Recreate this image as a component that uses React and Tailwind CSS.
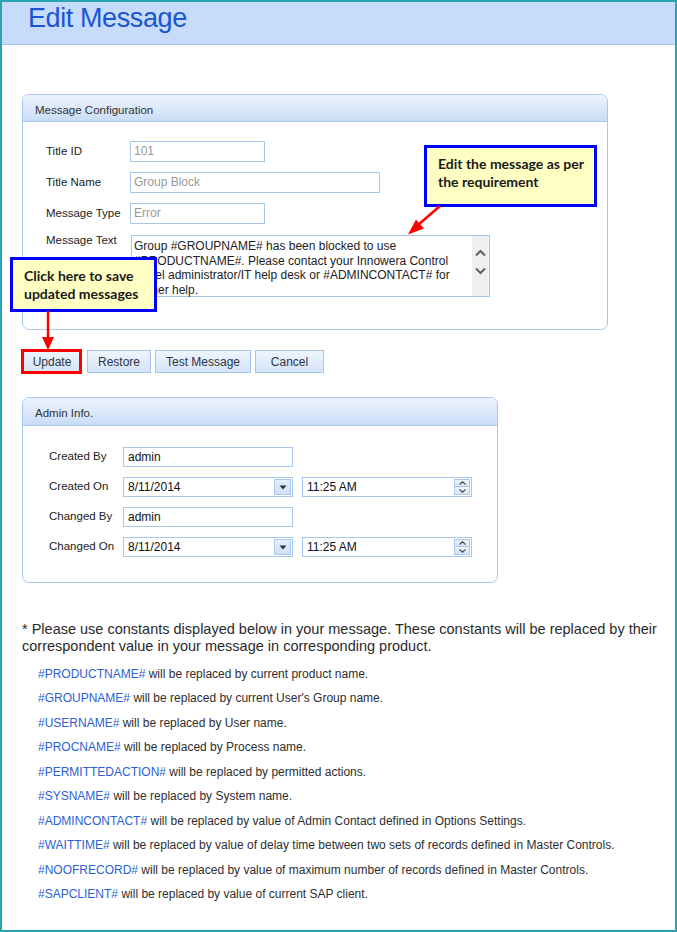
import React from "react";

const constants = [
  ["#PRODUCTNAME#", "will be replaced by current product name."],
  ["#GROUPNAME#", "will be replaced by current User's Group name."],
  ["#USERNAME#", "will be replaced by User name."],
  ["#PROCNAME#", "will be replaced by Process name."],
  ["#PERMITTEDACTION#", "will be replaced by permitted actions."],
  ["#SYSNAME#", "will be replaced by System name."],
  ["#ADMINCONTACT#", "will be replaced by value of Admin Contact defined in Options Settings."],
  ["#WAITTIME#", "will be replaced by value of delay time between two sets of records defined in Master Controls."],
  ["#NOOFRECORD#", "will be replaced by value of maximum number of records defined in Master Controls."],
  ["#SAPCLIENT#", "will be replaced by value of current SAP client."],
];

function PanelHeader({ title }) {
  return (
    <div className="h-[27px] border-b border-[#a9c8ef] rounded-t-[6px] bg-linear-to-b from-[#ebf3fe] via-[#dce9fb] to-[#c9dcf6] pl-[12px] pt-[8px] text-[11.5px] leading-[14px] text-[#333]">
      {title}
    </div>
  );
}

function DateBox({ value }) {
  return (
    <div className="relative w-[170px] h-[20px] border border-[#a9c6ec] bg-white pl-[4px] text-[12px] leading-[18px] text-[#111]">
      {value}
      <div className="absolute right-[1px] top-[1px] w-[17px] h-[16px] border border-[#a9c6ec] bg-linear-to-b from-[#e4eefc] to-[#cfe0f7] flex items-center justify-center">
        <svg width="8" height="5" viewBox="0 0 8 5">
          <path d="M0.5 0.5 L7.5 0.5 L4 4.5 Z" fill="#333" />
        </svg>
      </div>
    </div>
  );
}

function TimeBox({ value }) {
  return (
    <div className="relative w-[170px] h-[20px] border border-[#a9c6ec] bg-white pl-[4px] text-[12px] leading-[18px] text-[#111]">
      {value}
      <div className="absolute right-[1px] top-[1px] w-[16px] h-[16px] flex flex-col">
        <div className="h-[8px] border border-[#a9c6ec] bg-linear-to-b from-[#eef4fd] to-[#d6e5f8] flex items-center justify-center">
          <svg width="7" height="4" viewBox="0 0 7 4">
            <path d="M0.5 3.5 L3.5 0.8 L6.5 3.5" fill="none" stroke="#444" strokeWidth="1.1" />
          </svg>
        </div>
        <div className="h-[8px] border border-t-0 border-[#a9c6ec] bg-linear-to-b from-[#eef4fd] to-[#d6e5f8] flex items-center justify-center">
          <svg width="7" height="4" viewBox="0 0 7 4">
            <path d="M0.5 0.5 L3.5 3.2 L6.5 0.5" fill="none" stroke="#444" strokeWidth="1.1" />
          </svg>
        </div>
      </div>
    </div>
  );
}

function Btn({ w, children }) {
  return (
    <div className={`${w} h-[23px] border border-[#a7c4ea] bg-linear-to-b from-[#eef5fe] to-[#d5e4f8] flex items-center justify-center text-[12px] text-[#2b3440]`}>
      {children}
    </div>
  );
}

export default function App() {
  return (
    <div className="relative w-[677px] h-[932px] overflow-hidden font-['Liberation_Sans',Arial,sans-serif] text-[#333]">
      <div className="w-[677px] h-[932px] border-2 border-[#2aa3b3] bg-white">
        {/* Header */}
        <div className="h-[43px] border-b border-[#a3c6ee] bg-[#c6dcfa] pl-[26px]">
          <div className="text-[27px] tracking-[-0.4px] leading-[30px] pt-[1px] text-[#1b55d3]">Edit Message</div>
        </div>

        <div className="pl-[20px]">
          {/* Message Configuration panel */}
          <div className="mt-[49px] w-[586px] h-[236px] border border-[#a9c8ef] rounded-[7px] bg-white">
            <PanelHeader title="Message Configuration" />
            <div className="pl-[23px] pt-[19px] flex flex-col gap-[10px]">
              <div className="flex items-center">
                <div className="w-[84px] text-[11.5px] text-[#222]">Title ID</div>
                <div className="w-[135px] h-[21px] border border-[#a9c6ec] pl-[3px] text-[12px] leading-[19px] text-[#999]">101</div>
              </div>
              <div className="flex items-center">
                <div className="w-[84px] text-[11.5px] text-[#222]">Title Name</div>
                <div className="w-[250px] h-[21px] border border-[#a9c6ec] pl-[3px] text-[12px] leading-[19px] text-[#999]">Group Block</div>
              </div>
              <div className="flex items-center">
                <div className="w-[84px] text-[11.5px] text-[#222]">Message Type</div>
                <div className="w-[135px] h-[21px] border border-[#a9c6ec] pl-[3px] text-[12px] leading-[19px] text-[#999]">Error</div>
              </div>
              <div className="flex items-start mt-[1px]">
                <div className="w-[85px] text-[11.5px] leading-[14px] -mt-[2px] text-[#222]">Message Text</div>
                <div className="relative w-[359px] h-[62px] border border-[#a9c6ec] bg-white">
                  <div className="pl-[2px] pt-[3px] text-[12px] leading-[14.5px] text-[#222] whitespace-pre">
                    {"Group #GROUPNAME# has been blocked to use\n#PRODUCTNAME#. Please contact your Innowera Control\nPanel administrator/IT help desk or #ADMINCONTACT# for\nfurther help."}
                  </div>
                  <div className="absolute right-0 top-0 w-[17px] h-[60px] bg-[#f0f0f0] flex flex-col items-center pt-[13px] gap-[10px]">
                    <svg width="11" height="8" viewBox="0 0 11 8">
                      <path d="M1 6.5 L5.5 2 L10 6.5" fill="none" stroke="#606060" strokeWidth="2" />
                    </svg>
                    <svg width="11" height="8" viewBox="0 0 11 8">
                      <path d="M1 1.5 L5.5 6 L10 1.5" fill="none" stroke="#606060" strokeWidth="2" />
                    </svg>
                  </div>
                </div>
              </div>
            </div>
          </div>

          {/* Buttons */}
          <div className="mt-[20px] flex">
            <Btn w="w-[60px]">Update</Btn>
            <div className="ml-[5px]"><Btn w="w-[64px]">Restore</Btn></div>
            <div className="ml-[4px]"><Btn w="w-[96px]">Test Message</Btn></div>
            <div className="ml-[4px]"><Btn w="w-[69px]">Cancel</Btn></div>
          </div>

          {/* Admin Info panel */}
          <div className="mt-[24px] w-[476px] h-[186px] border border-[#a9c8ef] rounded-[7px] bg-white">
            <div className="h-[28px] border-b border-[#a9c8ef] rounded-t-[6px] bg-linear-to-b from-[#ebf3fe] via-[#dce9fb] to-[#c9dcf6] pl-[12px] pt-[8px] text-[11.5px] leading-[14px] text-[#333]">
              Admin Info.
            </div>
            <div className="pl-[26px] pt-[21px] flex flex-col gap-[10px]">
              <div className="flex items-center">
                <div className="w-[74px] text-[11.5px] text-[#222]">Created By</div>
                <div className="w-[170px] h-[20px] border border-[#a9c6ec] pl-[4px] text-[12px] leading-[18px] text-[#111]">admin</div>
              </div>
              <div className="flex items-center">
                <div className="w-[74px] text-[11.5px] text-[#222]">Created On</div>
                <DateBox value="8/11/2014" />
                <div className="ml-[9px]"><TimeBox value="11:25 AM" /></div>
              </div>
              <div className="flex items-center">
                <div className="w-[74px] text-[11.5px] text-[#222]">Changed By</div>
                <div className="w-[170px] h-[20px] border border-[#a9c6ec] pl-[4px] text-[12px] leading-[18px] text-[#111]">admin</div>
              </div>
              <div className="flex items-center">
                <div className="w-[74px] text-[11.5px] text-[#222]">Changed On</div>
                <DateBox value="8/11/2014" />
                <div className="ml-[9px]"><TimeBox value="11:25 AM" /></div>
              </div>
            </div>
          </div>

          {/* Notes */}
          <div className="mt-[38px] text-[14.5px] leading-[17.4px] text-[#2a2a2a]">
            * Please use constants displayed below in your message. These constants will be replaced by their
            <br />
            correspondent value in your message in corresponding product.
          </div>
          <div className="mt-[6px] pl-[16px]">
            {constants.map(([k, v]) => (
              <div key={k} className="text-[12px] leading-[24.5px] text-[#2e2e2e] whitespace-nowrap">
                <span className="text-[#2a62d4]">{k}</span> {v}
              </div>
            ))}
          </div>
        </div>
      </div>

      {/* Annotations */}
      <div className="absolute left-[424px] top-[145px] w-[173px] h-[62px] border-[3px] border-[#0000ff] bg-[#ffffc3] pl-[11px] pt-[7px] font-['Lato',sans-serif] font-bold text-[14px] leading-[18px] text-[#1a1a1a]">
        Edit the message as per
        <br />
        the requirement
      </div>
      <div className="absolute left-[10px] top-[257px] w-[147px] h-[55px] border-[3px] border-[#0000ff] bg-[#ffffc3] pl-[11px] pt-[7px] font-['Lato',sans-serif] font-bold text-[14px] leading-[18px] text-[#1a1a1a]">
        Click here to save
        <br />
        updated messages
      </div>
      <div className="absolute left-[21px] top-[349px] w-[61px] h-[25px] border-[3px] border-[#ff0000]" />
      <svg className="absolute left-0 top-0 pointer-events-none" width="677" height="932" viewBox="0 0 677 932">
        <line x1="440" y1="206" x2="418" y2="225" stroke="#ff0000" strokeWidth="2.5" />
        <polygon points="408,234.5 424,228.5 416,219.4" fill="#ff0000" />
        <line x1="48" y1="311" x2="48" y2="340" stroke="#ff0000" strokeWidth="2.5" />
        <polygon points="48,350 42,337 54,337" fill="#ff0000" />
      </svg>
    </div>
  );
}
